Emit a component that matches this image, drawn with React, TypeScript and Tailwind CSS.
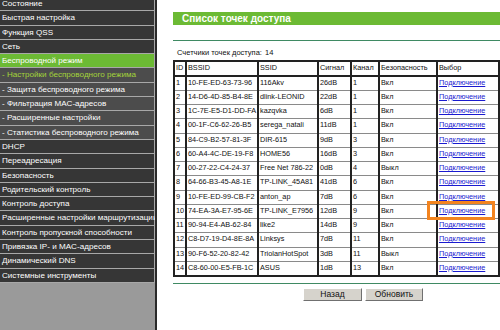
import React from "react";

const menu = [
  { label: "Состояние" },
  { label: "Быстрая настройка" },
  { label: "Функция QSS" },
  { label: "Сеть" },
  { label: "Беспроводной режим", open: true },
  { label: "- Настройки беспроводного режима", sub: true, active: true },
  { label: "- Защита беспроводного режима", sub: true },
  { label: "- Фильтрация MAC-адресов", sub: true },
  { label: "- Расширенные настройки", sub: true },
  { label: "- Статистика беспроводного режима", sub: true },
  { label: "DHCP" },
  { label: "Переадресация" },
  { label: "Безопасность" },
  { label: "Родительский контроль" },
  { label: "Контроль доступа" },
  { label: "Расширенные настройки маршрутизации" },
  { label: "Контроль пропускной способности" },
  { label: "Привязка IP- и MAC-адресов" },
  { label: "Динамический DNS" },
  { label: "Системные инструменты" },
];

const points = [
  ["1", "10-FE-ED-63-73-96", "116Akv", "26dB", "1", "Вкл"],
  ["2", "14-D6-4D-85-B4-8E", "dlink-LEONID", "22dB", "1", "Вкл"],
  ["3", "1C-7E-E5-D1-DD-FA", "kazqvka", "6dB", "1", "Вкл"],
  ["4", "00-1F-C6-62-26-B5", "serega_natali", "11dB", "1", "Вкл"],
  ["5", "84-C9-B2-57-81-3F", "DIR-615", "9dB", "3", "Вкл"],
  ["6", "60-A4-4C-DE-19-F8", "HOME56", "16dB", "3", "Вкл"],
  ["7", "00-27-22-C4-24-37", "Free Net 786-22", "0dB", "4", "Выкл"],
  ["8", "64-66-B3-45-A8-1E", "TP-LINK_45A81", "41dB", "6", "Вкл"],
  ["9", "10-FE-ED-99-CB-F2", "anton_ap", "7dB", "6", "Вкл"],
  ["10", "74-EA-3A-E7-95-6E", "TP-LINK_E7956", "12dB", "9", "Вкл"],
  ["11", "90-94-E4-AB-62-84", "like2", "14dB", "9", "Вкл"],
  ["12", "C8-D7-19-D4-8E-8A", "Linksys", "7dB", "11", "Вкл"],
  ["13", "90-F6-52-20-82-42", "TriolanHotSpot", "3dB", "11", "Выкл"],
  ["14", "C8-60-00-E5-FB-1C", "ASUS", "1dB", "13", "Вкл"],
];

const cell = "border-x-2 border-x-[#222] border-y border-y-[#8a8a8a] px-[1px] whitespace-nowrap overflow-hidden";

const Sidebar = () => {
  return (
    <div className="w-[157px] h-[330px] shrink-0 bg-[#9a9a9a] border-r-2 border-[#2a2a2a] overflow-hidden">
      <div className="-mt-[3px]">
        {menu.map((m) => (
          <div
            key={m.label}
            className={
              "h-[14.3px] border-b border-r border-[#a8a8a8] pl-[2px] text-[8.1px] leading-[13px] whitespace-nowrap " +
              (m.open
                ? "bg-[#6cba34] text-white"
                : m.sub
                ? "bg-[#4c4c4c] " + (m.active ? "text-[#a4d43a]" : "text-white")
                : "bg-[#363636] text-white")
            }
          >
            {m.label}
          </div>
        ))}
      </div>
    </div>
  );
};

export default function App() {
  return (
    <div
      className="w-[500px] h-[330px] bg-white flex overflow-hidden"
      style={{ fontFamily: '"Liberation Sans", Arial, sans-serif' }}
    >
      <Sidebar />
      <div className="relative flex-1 pl-[16px] pt-[12px]">
        <div className="h-[13px] bg-[#6cba34] text-white font-bold text-[10px] leading-[13px] pl-[9px]">
          Список точек доступа
        </div>
        <div className="mt-[15px] h-px bg-[#3f8a63]" />
        <div className="mt-[7px] pl-[4px] text-[7.5px] leading-[10px] text-[#111] flex">
          <span className="w-[88px]">Счетчики точек доступа:</span>
          <span>14</span>
        </div>
        <table className="mt-[2px] w-[325px] table-fixed border-collapse border-2 border-[#222] text-[7.3px] text-[#111]">
          <colgroup>
            <col className="w-[12px]" />
            <col className="w-[72px]" />
            <col className="w-[60px]" />
            <col className="w-[33px]" />
            <col className="w-[28px]" />
            <col className="w-[58px]" />
            <col className="w-[62px]" />
          </colgroup>
          <thead>
            <tr className="h-[15px] text-left">
              {["ID", "BSSID", "SSID", "Сигнал", "Канал", "Безопасность", "Выбор"].map((h) => (
                <th key={h} className={cell + " font-normal border-b-2 border-b-[#222]"}>
                  {h}
                </th>
              ))}
            </tr>
          </thead>
          <tbody>
            {points.map((p) => (
              <tr key={p[0]} className="h-[14.25px]">
                {p.map((v, i) => (
                  <td key={i} className={cell}>
                    {v}
                  </td>
                ))}
                <td className={cell}>
                  <a href="#" className="text-[#1a1ad0] underline">
                    Подключение
                  </a>
                </td>
              </tr>
            ))}
          </tbody>
        </table>
        <div className="mt-[6px] h-px bg-[#3f8a63]" />
        <div className="mt-[4px] flex gap-[3px] pl-[130px] text-[8.5px] text-[#111]">
          <button className="w-[59px] h-[13px] leading-[11px] bg-[#d6d3cc] border border-t-white border-l-white border-b-[#707070] border-r-[#707070]">
            Назад
          </button>
          <button className="w-[58px] h-[13px] leading-[11px] bg-[#d6d3cc] border border-t-white border-l-white border-b-[#707070] border-r-[#707070]">
            Обновить
          </button>
        </div>
        <div className="absolute left-[270px] top-[201px] w-[68px] h-[19px] border-[3px] border-[#f3841f]" />
      </div>
    </div>
  );
}
